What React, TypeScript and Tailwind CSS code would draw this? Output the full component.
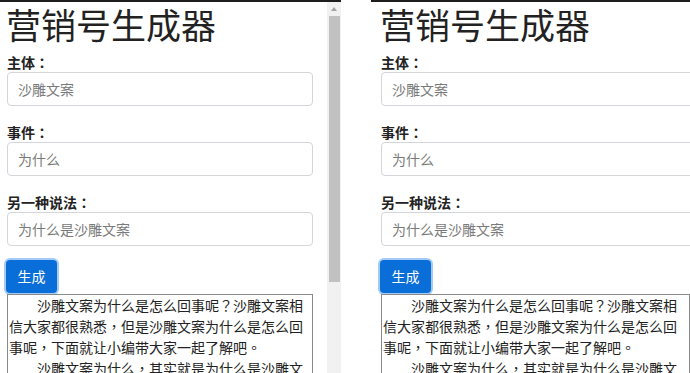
const FONT = "font-['Noto_Sans_CJK_TC','Noto_Sans_CJK_SC',sans-serif]";

const fields = [
  { label: '主体：', placeholder: '沙雕文案' },
  { label: '事件：', placeholder: '为什么' },
  { label: '另一种说法：', placeholder: '为什么是沙雕文案' },
];

const paragraphs = [
  '沙雕文案为什么是怎么回事呢？沙雕文案相信大家都很熟悉，但是沙雕文案为什么是怎么回事呢，下面就让小编带大家一起了解吧。',
  '沙雕文案为什么，其实就是为什么是沙雕文案，大家可能会很惊讶沙雕文案怎么会为什么呢？但事实就是这样，小编也感到非常惊讶。',
];

function Generator({ inputWidth, boxWidth }: { inputWidth: string; boxWidth: string }) {
  return (
    <div className="flex flex-col items-start">
      <h1 className="-mt-[1px] -ml-[1px] text-[35px] leading-[46px] font-normal text-[#222]">营销号生成器</h1>

      <div className="mt-[5px] flex flex-col gap-[16px]">
        {fields.map((f) => (
          <div key={f.label} className="flex flex-col">
            <label className="h-5 text-[14px] leading-5 font-bold text-[#222]">{f.label}</label>
            <input
              className={`${inputWidth} h-[34px] rounded-[4px] border border-[#d2d6da] bg-white pl-[10px] text-[14px] text-[#495057] outline-none placeholder:text-[#7a7a7a]`}
              placeholder={f.placeholder}
            />
          </div>
        ))}
      </div>

      <button
        type="button"
        className="mt-[14px] -ml-[1px] h-[33px] w-[51px] rounded-[4px] bg-[#0a6ed8] text-[14px] text-white shadow-[0_0_0_2px_rgba(90,160,240,0.55)]"
      >
        生成
      </button>

      <div className={`mt-[1px] ${boxWidth} border border-[#8a8a8a] px-[1px] text-[14px] leading-[21px] text-[#222]`}>
        {paragraphs.map((p, i) => (
          <p key={i} className="indent-[28px]">
            {p}
          </p>
        ))}
      </div>
    </div>
  );
}

export default function App() {
  return (
    <div className={`flex h-[373px] w-[690px] overflow-hidden bg-white ${FONT}`}>
      {/* left preview with its scrollbar */}
      <div className="flex w-[341px] shrink-0 border-t-2 border-[#1e1e1e]">
        <div className="w-[327px] overflow-hidden pl-[7px]">
          <Generator inputWidth="w-[306px]" boxWidth="w-[306px]" />
        </div>
        <div className="flex w-[14px] flex-col items-center bg-[#f1f1f1]">
          <div className="mt-[5px] h-0 w-0 border-x-[3.5px] border-b-[4px] border-x-transparent border-b-[#a3a3a3]" />
          <div className="mt-[5px] h-[266px] w-[11px] bg-[#c1c1c1]" />
        </div>
      </div>

      <div className="w-[30px] shrink-0" />

      {/* right preview */}
      <div className="flex-1 overflow-hidden border-t-2 border-[#1e1e1e] pl-[10px]">
        <Generator inputWidth="w-[320px]" boxWidth="w-[309px]" />
      </div>
    </div>
  );
}
